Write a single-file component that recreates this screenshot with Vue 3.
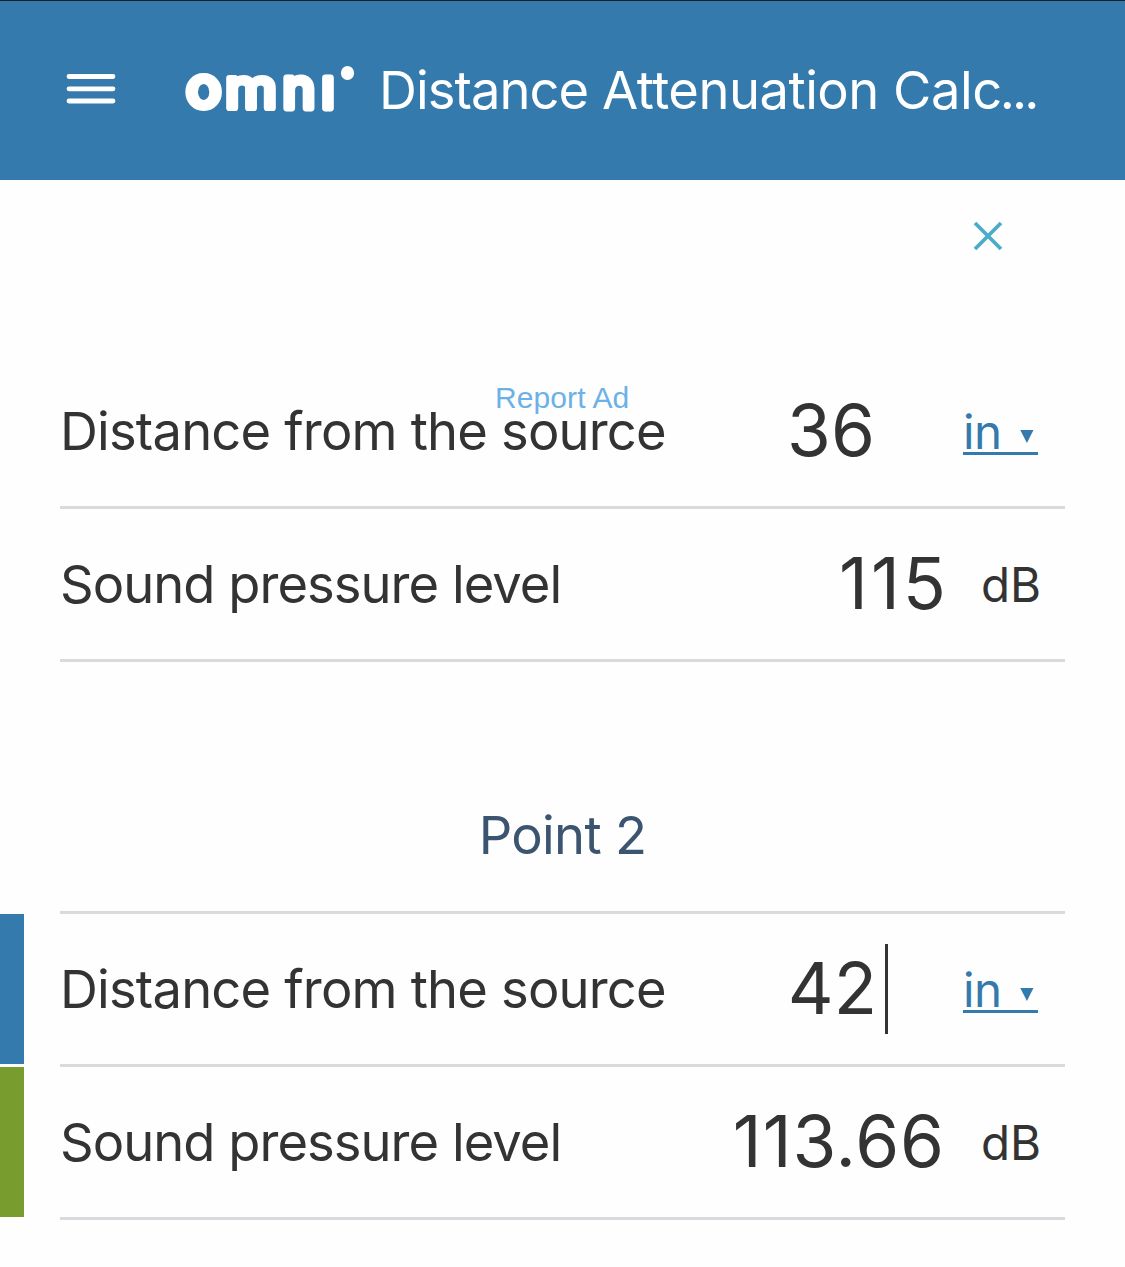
<script setup>
const points = [
  {
    id: 1,
    rows: [
      { label: 'Distance from the source', value: '36', unit: 'in', select: true },
      { label: 'Sound pressure level', value: '115', unit: 'dB' },
    ],
  },
  {
    id: 2,
    title: 'Point 2',
    rows: [
      { label: 'Distance from the source', value: '42', unit: 'in', select: true, mark: 'blue', focused: true },
      { label: 'Sound pressure level', value: '113.66', unit: 'dB', mark: 'green' },
    ],
  },
]
</script>

<template>
  <div class="page">
    <header class="header">
      <svg class="menu" width="50" height="32" viewBox="0 0 50 32">
        <path d="M3 3.5H47M3 15.8H47M3 28H47" />
      </svg>
      <svg class="logo" width="172" height="50" viewBox="0 0 172 50" role="img">
        <g class="wordmark">
          <text class="round" transform="translate(2.4 42.3) scale(1.15 1)">o</text>
          <text class="broad" transform="translate(40.1 44.7) scale(1.08 1)">m</text>
          <text x="97.6 136.3" y="44.7">nı</text>
        </g>
        <ellipse cx="162.5" cy="10" rx="6.6" ry="7" />
      </svg>
      <h1 class="title">Distance <span class="loose">Attenuation Calc</span><span class="dots">...</span></h1>
    </header>

    <div class="ad">
      <svg class="close" width="30" height="30" viewBox="0 0 30 30">
        <path d="M2 2L28 28M28 2L2 28" />
      </svg>
      <a class="report">Report Ad</a>
    </div>

    <section v-for="point in points" :key="point.id">
      <h2 v-if="point.title" class="heading">{{ point.title }}</h2>
      <div v-for="row in point.rows" :key="row.label" class="row">
        <i v-if="row.mark" class="mark" :class="row.mark"></i>
        <div class="field">
          <span class="label" :class="{ sound: !row.select }">{{ row.label }}</span>
          <span class="value" :class="{ wide: !row.select, decimal: row.value.includes('.'), focused: row.focused }">{{ row.value }}<i v-if="row.focused" class="caret"></i></span>
          <span v-if="row.select" class="unit link">{{ row.unit }}<svg width="14" height="13" viewBox="0 0 14 13"><path d="M.3 0H13.5L6.9 13Z" /></svg></span>
          <span v-else class="unit">{{ row.unit }}</span>
        </div>
      </div>
    </section>
  </div>
</template>

<style>
body {
  margin: 0;
  background: #fff;
}
</style>

<style scoped>
.page {
  width: 1125px;
  height: 1267px;
  overflow: hidden;
  background: #fefefe;
  color: #333;
  font-family: Inter, 'Liberation Sans', sans-serif;
}
.header {
  box-sizing: border-box;
  display: flex;
  align-items: center;
  height: 180px;
  padding-left: 66px;
  border-top: 1px solid #10202c;
  background: #347aad;
  color: #fff;
}
.menu {
  margin-top: -3px;
  fill: none;
  stroke: #fff;
  stroke-width: 4.8;
  stroke-linecap: round;
}
.logo {
  margin-left: 69px;
  margin-top: -6px;
  fill: #fff;
  overflow: visible;
}
.wordmark {
  font-family: Inter, sans-serif;
  font-size: 55.5px;
  font-weight: 400;
  stroke: #fff;
  stroke-width: 6.8;
  stroke-linejoin: round;
}
.wordmark .round {
  font-size: 48.5px;
  font-weight: 100;
  stroke-width: 9.8;
}
.wordmark .broad {
  font-size: 55px;
  stroke-width: 6.2;
}
.title {
  margin: -2px 0 0 22px;
  font-size: 52.5px;
  font-weight: 400;
  line-height: 64px;
  letter-spacing: -0.95px;
  white-space: nowrap;
}
.loose {
  letter-spacing: -0.5px;
}
.dots {
  letter-spacing: -2.8px;
  margin-left: -2px;
}
.ad {
  position: relative;
  height: 176px;
}
.close {
  position: absolute;
  top: 41px;
  left: 973px;
  fill: none;
  stroke: #4bacc8;
  stroke-width: 3.8;
}
.report {
  position: absolute;
  top: 200px;
  left: 495px;
  font: 30px/36px 'Liberation Sans', Arial, sans-serif;
  letter-spacing: 0.1px;
  color: #6cb1e6;
}
.heading {
  display: flex;
  align-items: center;
  justify-content: center;
  box-sizing: border-box;
  height: 252px;
  margin: 0 60px;
  padding-top: 97px;
  border-bottom: 3px solid #d9d9de;
  color: #3b546f;
  font-size: 52.5px;
  font-weight: 400;
  line-height: 64px;
  letter-spacing: -0.7px;
}
.row {
  display: flex;
  height: 153px;
}
.mark {
  width: 24px;
  height: 150px;
  margin-right: -24px;
}
.blue {
  background: #347aad;
}
.green {
  background: #789d2e;
}
.field {
  display: flex;
  align-items: center;
  flex: 1;
  height: 150px;
  margin: 0 60px;
  border-bottom: 3px solid #d9d9de;
}
.label {
  font-size: 52.5px;
  line-height: 64px;
  letter-spacing: -0.82px;
  white-space: nowrap;
}
.label.sound {
  letter-spacing: -0.97px;
}
.value {
  position: relative;
  margin-left: auto;
  margin-right: 88px;
  padding-bottom: 3px;
  font-size: 71px;
  line-height: 88px;
}
.value.focused {
  margin-right: 86px;
}
.value.wide {
  margin-right: 32px;
  letter-spacing: 3px;
}
.value.decimal {
  margin-right: 36px;
  letter-spacing: 0.9px;
}
.caret {
  position: absolute;
  top: 0;
  right: -11px;
  width: 3px;
  height: 90px;
  background: #333;
}
.unit {
  box-sizing: border-box;
  width: 84px;
  padding-top: 2px;
  font-size: 47.5px;
  line-height: 58px;
  white-space: nowrap;
}
.link {
  width: 75px;
  height: 48px;
  margin-right: 27px;
  padding-top: 0;
  border-bottom: 3px solid #347aad;
  color: #347aad;
  line-height: 49px;
  letter-spacing: -0.5px;
}
.link svg {
  margin-left: 18.5px;
  vertical-align: 6px;
  fill: #347aad;
}
</style>
